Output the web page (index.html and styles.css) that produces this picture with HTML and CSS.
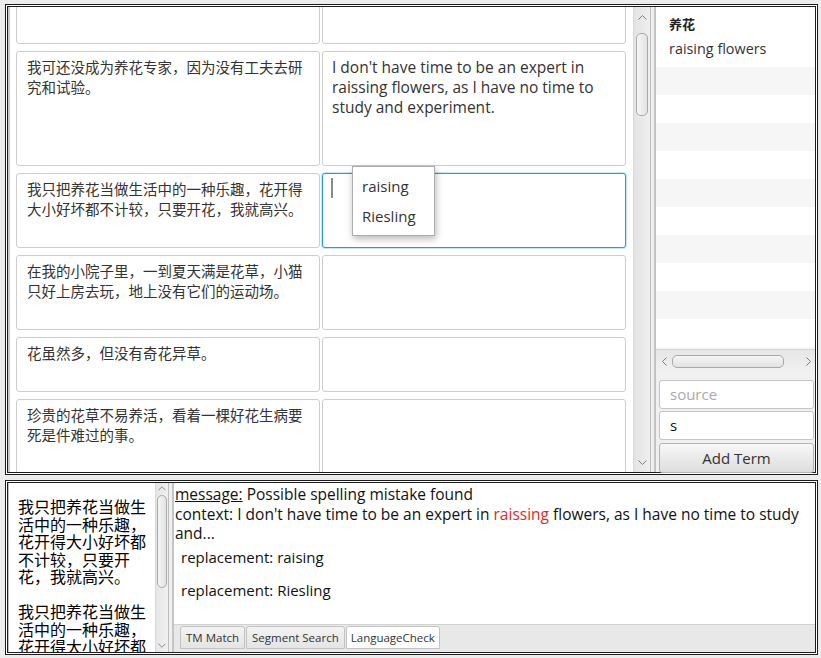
FILE: index.html
```html
<!DOCTYPE html>
<html>
<head>
<meta charset="utf-8">
<title>Translation editor</title>
<link rel="stylesheet" href="styles.css">
</head>
<body>
<div class="window">
  <section class="pane pane-top">
    <div class="table">
      <div class="rows">
        <div class="row r0"><div class="cell src"></div><div class="cell tgt"></div></div>
        <div class="row r1">
          <div class="cell src">我可还没成为养花专家，因为没有工夫去研究和试验。</div>
          <div class="cell tgt">I don't have time to be an expert in raissing flowers, as I have no time to study and experiment.</div>
        </div>
        <div class="row r2">
          <div class="cell src">我只把养花当做生活中的一种乐趣，花开得大小好坏都不计较，只要开花，我就高兴。</div>
          <div class="cell tgt focused">
            <span class="caret"></span>
            <div class="popup">
              <div class="popup-item">raising</div>
              <div class="popup-item">Riesling</div>
            </div>
          </div>
        </div>
        <div class="row r3">
          <div class="cell src">在我的小院子里，一到夏天满是花草，小猫只好上房去玩，地上没有它们的运动场。</div>
          <div class="cell tgt"></div>
        </div>
        <div class="row r4">
          <div class="cell src">花虽然多，但没有奇花异草。</div>
          <div class="cell tgt"></div>
        </div>
        <div class="row r5">
          <div class="cell src">珍贵的花草不易养活，看着一棵好花生病要死是件难过的事。</div>
          <div class="cell tgt"></div>
        </div>
      </div>
      <div class="vscroll">
        <div class="arrow-box top"><svg class="chev" width="9" height="5" viewBox="0 0 9 5"><polyline points="0.5,4.5 4.5,0.5 8.5,4.5"/></svg></div>
        <div class="thumb"></div>
        <div class="spacer"></div>
        <div class="arrow-box bottom"><svg class="chev" width="9" height="5" viewBox="0 0 9 5"><polyline points="0.5,0.5 4.5,4.5 8.5,0.5"/></svg></div>
      </div>
    </div>
    <div class="split"></div>
    <div class="side">
      <div class="list">
        <div class="term">
          <div class="term-src">养花</div>
          <div class="term-tgt">raising flowers</div>
        </div>
        <div class="stripes"></div>
      </div>
      <div class="hscroll">
        <svg class="chev" width="5" height="9" viewBox="0 0 5 9"><polyline points="4.5,0.5 0.5,4.5 4.5,8.5"/></svg>
        <div class="hthumb"></div>
        <svg class="chev" width="5" height="9" viewBox="0 0 5 9"><polyline points="0.5,0.5 4.5,4.5 0.5,8.5"/></svg>
      </div>
      <div class="field placeholder">source</div>
      <div class="field">s</div>
      <div class="button">Add Term</div>
    </div>
  </section>

  <section class="pane pane-bottom">
    <div class="source-view">
      <div class="source-text">
        <p>我只把养花当做生活中的一种乐趣，花开得大小好坏都不计较，只要开花，我就高兴。</p>
        <p>我只把养花当做生活中的一种乐趣，花开得大小好坏都不计较，只要开花，我就高兴。</p>
      </div>
      <div class="vscroll small">
        <div class="arrow-box top"><svg class="chev" width="9" height="5" viewBox="0 0 9 5"><polyline points="0.5,4.5 4.5,0.5 8.5,4.5"/></svg></div>
        <div class="thumb"></div>
        <div class="spacer"></div>
        <div class="arrow-box bottom"><svg class="chev" width="9" height="5" viewBox="0 0 9 5"><polyline points="0.5,0.5 4.5,4.5 8.5,0.5"/></svg></div>
      </div>
    </div>
    <div class="split"></div>
    <div class="check-view">
      <div class="messages">
        <div class="msg"><span class="u">message:</span> Possible spelling mistake found</div>
        <div class="msg">context: I don't have time to be an expert in <span class="err">raissing</span> flowers, as I have no time to study and...</div>
        <div class="rep first">replacement: raising</div>
        <div class="rep">replacement: Riesling</div>
      </div>
      <div class="tabs">
        <div class="tab">TM Match</div>
        <div class="tab">Segment Search</div>
        <div class="tab active">LanguageCheck</div>
      </div>
    </div>
  </section>
</div>
</body>
</html>
```

FILE: styles.css
```css
* { box-sizing: border-box; }
html, body { margin: 0; padding: 0; }
body {
  width: 821px;
  height: 658px;
  overflow: hidden;
  background: #ececec;
  font-family: "Open Sans", "Noto Sans CJK SC", sans-serif;
  color: #333;
}
.window {
  height: 658px;
  display: flex;
  flex-direction: column;
  gap: 5px;
  padding: 4px 3px 3px 5px;
}
.pane {
  display: flex;
  border: 1px solid #1c1c1c;
  padding: 2px;
  background: #fff;
  box-shadow: inset 0 0 0 1px #fff, inset 0 0 0 2px #1c1c1c;
  overflow: hidden;
}
.pane-top { height: 471px; flex: none; }
.pane-bottom { height: 175px; flex: none; }

/* ---------- segment table ---------- */
.table {
  width: 642px;
  flex: none;
  display: flex;
  border-left: 2px solid #c9c9c9;
  padding-left: 6px;
  overflow: hidden;
  background: #fff;
}
.rows {
  width: 610px;
  flex: none;
  display: flex;
  flex-direction: column;
  gap: 7px;
  margin-top: -20px;
  margin-right: 7px;
}
.row { display: flex; gap: 2px; flex: none; }
.r0 { height: 57px; }
.r1 { height: 115px; }
.r2 { height: 75px; }
.r3 { height: 75px; }
.r4 { height: 55px; }
.r5 { height: 75px; }
.cell {
  flex: 0 0 304px;
  border: 1px solid #cdcdcd;
  border-radius: 3px;
  background: #fff;
  padding: 5px 8px 5px 9px;
  line-height: 20px;
  color: #333;
}
.src { font-family: "Noto Sans CJK SC", sans-serif; font-size: 14.5px; padding-left: 10px; }
.tgt { font-size: 15.5px; }
.focused {
  position: relative;
  border-color: #1fa0d6;
  box-shadow: 0 0 0 1px rgba(31, 160, 214, 0.25);
}
.caret {
  position: absolute;
  left: 8px;
  top: 4px;
  width: 2px;
  height: 20px;
  background: #8a8a8a;
}
.popup {
  position: absolute;
  left: 29px;
  top: -8px;
  width: 83px;
  z-index: 5;
  background: #fff;
  border: 1px solid #acacac;
  padding: 5px 0 3px;
  box-shadow: 1px 3px 7px rgba(0, 0, 0, 0.28);
}
.popup-item {
  height: 30px;
  line-height: 29px;
  padding-left: 9px;
  font-size: 15px;
  color: #333;
}

/* ---------- scrollbars ---------- */
.vscroll {
  width: 17px;
  flex: none;
  display: flex;
  flex-direction: column;
  align-items: center;
  background: linear-gradient(to right, #e4e4e4, #efefef);
  border-left: 1px solid #d8d8d8;
}
.arrow-box { height: 24px; width: 100%; display: flex; justify-content: center; flex: none; }
.arrow-box.top { align-items: flex-start; padding-top: 8px; }
.arrow-box.bottom { align-items: flex-end; padding-bottom: 7px; }
.chev { fill: none; stroke: #7d7d7d; stroke-width: 1; display: block; }
.thumb {
  width: 12px;
  height: 83px;
  margin-top: 2px;
  flex: none;
  border: 1px solid #a9a9a9;
  border-radius: 5px;
  background: linear-gradient(to right, #f6f6f6, #e2e2e2);
}
.spacer { flex: 1; }

.split {
  width: 6px;
  flex: none;
  background: #efefef;
  border-left: 1px solid #bdbdbd;
  border-right: 2px solid #c4c4c4;
}

/* ---------- glossary side ---------- */
.side {
  flex: 1;
  display: flex;
  flex-direction: column;
  background: #f0f0f0;
}
.list {
  height: 342px;
  flex: none;
  display: flex;
  flex-direction: column;
  background: #fff;
}
.term {
  height: 60px;
  flex: none;
  padding: 6px 0 0 13px;
}
.term-src {
  height: 22px;
  line-height: 22px;
  font-family: "Noto Sans CJK SC", sans-serif;
  font-weight: 700;
  font-size: 13px;
  color: #222;
}
.term-tgt { margin-top: 3px; line-height: 22px; font-size: 14.4px; color: #333; }
.stripes {
  flex: 1;
  background: repeating-linear-gradient(to bottom, #f6f6f6 0 28px, #fff 28px 56px);
}
.hscroll {
  height: 22px;
  flex: none;
  display: flex;
  align-items: center;
  padding: 1px 4px 0 6px;
  gap: 5px;
  background: linear-gradient(to bottom, #e6e6e6, #f0f0f0);
  border-top: 1px solid #d6d6d6;
}
.hthumb {
  width: 112px;
  height: 13px;
  border: 1px solid #a9a9a9;
  border-radius: 5px;
  background: linear-gradient(to bottom, #f6f6f6, #e2e2e2);
  margin-right: auto;
}
.field {
  height: 29px;
  flex: none;
  margin: 9px 1px 0 3px;
  border: 1px solid #c5c5c5;
  border-radius: 3px;
  background: #fff;
  padding: 0 10px;
  line-height: 27px;
  font-size: 15px;
  color: #111;
}
.field + .field { margin-top: 2px; }
.placeholder { color: #a9a9a9; }
.button {
  height: 30px;
  flex: none;
  margin: 3px 1px 0 3px;
  border: 1px solid #b3b3b3;
  border-radius: 3px;
  background: linear-gradient(to bottom, #f8f8f8, #dddddd);
  text-align: center;
  line-height: 28px;
  font-size: 15px;
  color: #333;
}

/* ---------- bottom ---------- */
.source-view {
  width: 160px;
  flex: none;
  display: flex;
  border-left: 1px solid #c0c0c0;
}
.source-text {
  flex: 1;
  padding: 15px 0 0 9px;
  font-family: "Noto Sans CJK SC", sans-serif;
  font-size: 16px;
  line-height: 17.5px;
  color: #000;
  overflow: hidden;
}
.source-text p { margin: 0 0 17.5px; width: 132px; }
.vscroll.small { width: 13px; background: linear-gradient(to right, #e6e6e6, #f0f0f0); }
.vscroll.small .arrow-box.top { padding-top: 3px; height: 12px; }
.vscroll.small .arrow-box.bottom { padding-bottom: 4px; }
.vscroll.small .chev { width: 8px; }
.vscroll.small .thumb { width: 10px; height: 93px; margin-top: 0; }

.check-view {
  flex: 1;
  display: flex;
  flex-direction: column;
  background: #fff;
}
.messages {
  flex: 1;
  padding: 2px 8px 0 1px;
  color: #111;
}
.msg { line-height: 19.5px; font-size: 15.5px; }
.u { text-decoration: underline; }
.err { color: #f21c1c; }
.rep { line-height: 20px; font-size: 15px; padding-left: 6px; margin-top: 13px; }
.rep.first { margin-top: 3px; }
.tabs {
  height: 28px;
  flex: none;
  display: flex;
  align-items: flex-start;
  gap: 1px;
  padding: 1px 0 0 6px;
  background: #e8e8e8;
  border-top: 1px solid #d2d2d2;
}
.tab {
  height: 23px;
  padding: 0 5px;
  border: 1px solid #c3c3c3;
  border-radius: 3px 3px 0 0;
  background: linear-gradient(to bottom, #f3f3f3, #e4e4e4);
  font-size: 11.5px;
  line-height: 21px;
  color: #333;
}
.tab.active { background: #fff; padding: 0 4px; }
```
